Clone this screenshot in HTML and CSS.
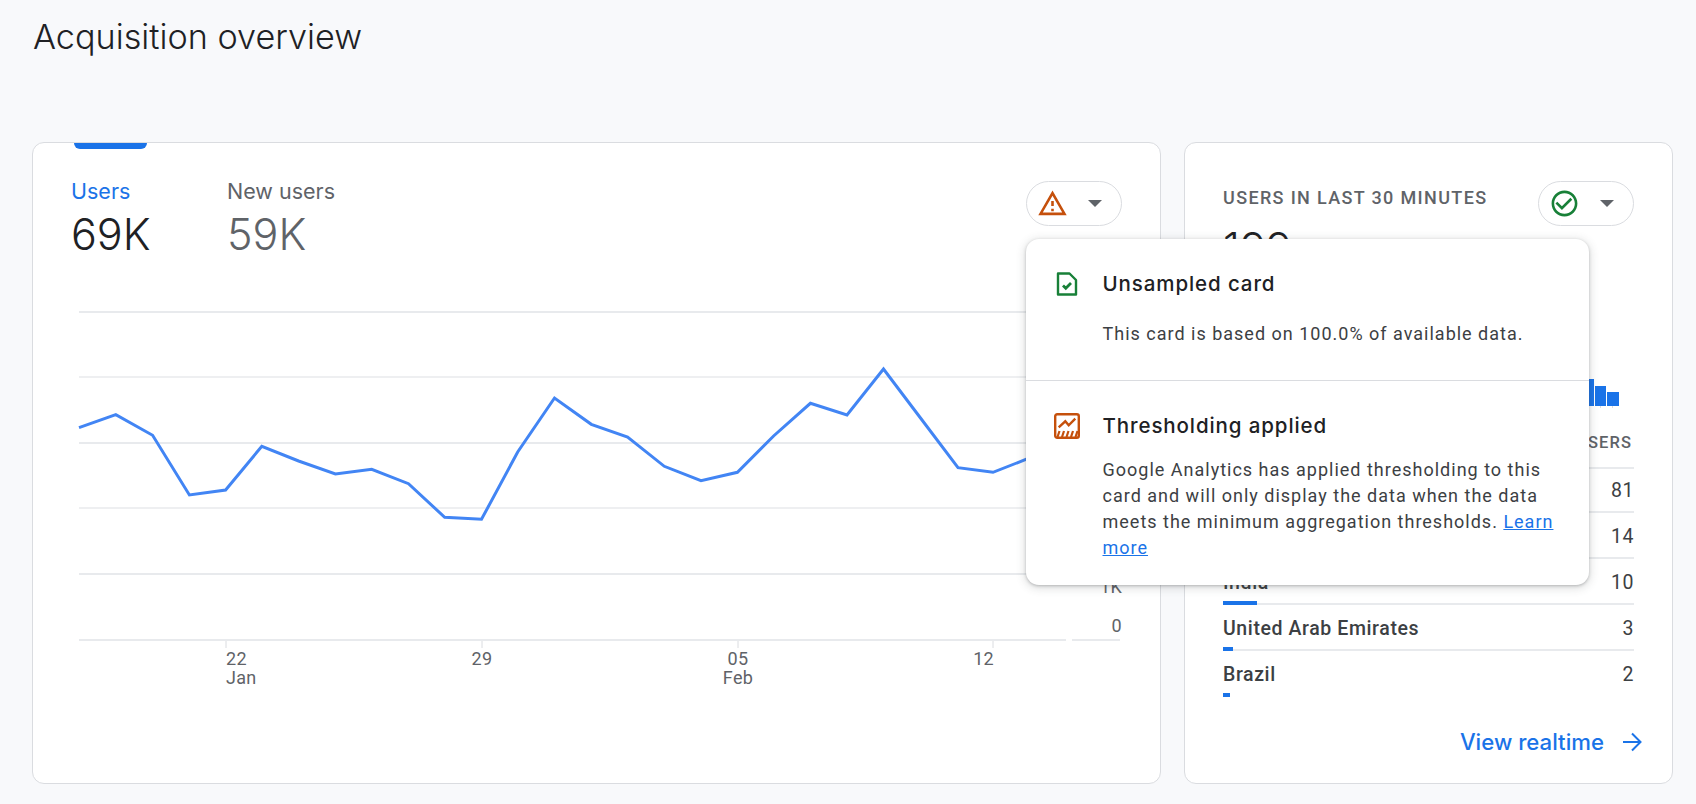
FILE: index.html
```html
<!DOCTYPE html>
<html lang="en">
<head>
<meta charset="utf-8">
<title>Acquisition overview</title>
<link rel="stylesheet" href="styles.css">
</head>
<body>
<div class="page">
  <h1 class="page-title">Acquisition overview</h1>
  <div class="cards">
    <section class="card card-main">
      <div class="tab-marker"></div>
      <div class="main-head">
        <div class="metrics">
          <div class="metric metric-active">
            <div class="metric-label">Users</div>
            <div class="metric-value">69K</div>
          </div>
          <div class="metric">
            <div class="metric-label">New users</div>
            <div class="metric-value">59K</div>
          </div>
        </div>
        <div class="chip chip-offset">
          <svg class="chip-icon warn" viewBox="0 0 24 24"><path d="M1 21h22L12 2 1 21zm3.47-2L12 5.99 19.53 19H4.47zM11 16h2v2h-2zm0-6h2v4h-2z"/></svg>
          <span class="caret"></span>
        </div>
      </div>
      <svg class="chart" viewBox="33 260 1127 440" width="1127" height="440">
        <g class="grid">
          <line x1="79" x2="1120" y1="312" y2="312"/>
          <line class="thin" x1="79" x2="1120" y1="377" y2="377"/>
          <line x1="79" x2="1120" y1="443" y2="443"/>
          <line class="thin" x1="79" x2="1120" y1="508" y2="508"/>
          <line x1="79" x2="1120" y1="574" y2="574"/>
          <line x1="79" x2="1066" y1="640" y2="640"/>
          <line x1="1072" x2="1120" y1="640" y2="640"/>
        </g>
        <g class="ticks">
          <line x1="226" x2="226" y1="641" y2="648"/>
          <line x1="482" x2="482" y1="641" y2="648"/>
          <line x1="738" x2="738" y1="641" y2="648"/>
          <line x1="993" x2="993" y1="641" y2="648"/>
        </g>
        <polyline class="series" points="79,427.7 115.8,414.7 152.6,435.3 189.4,495 225.6,490 261.8,446.3 298.6,461 335.4,474 371.7,469.3 408.5,483.7 444.7,517.3 481.5,519.3 517.7,452 554.5,398 591.3,424.3 627.6,437 664.3,466.3 701,480.7 737.4,472.3 773.6,436 810.4,403.3 847,415 883.5,369 920.5,418 958,467.7 993,472.3 1029.5,458 1066,440"/>
        <g class="axis-text">
          <text x="226" y="665">22</text>
          <text x="226" y="684">Jan</text>
          <text class="mid" x="482" y="665">29</text>
          <text class="mid" x="738" y="665">05</text>
          <text class="mid" x="738" y="684">Feb</text>
          <text class="end" x="994" y="665">12</text>
          <text class="end" x="1122" y="593">1K</text>
          <text class="end" x="1122" y="632">0</text>
        </g>
      </svg>
    </section>

    <section class="card card-side">
      <div class="side-head">
        <div class="side-heading">
          <div class="side-title">USERS IN LAST 30 MINUTES</div>
          <div class="metric-value">199</div>
        </div>
        <div class="chip">
          <svg class="chip-icon ok" viewBox="0 0 24 24"><path d="M16.59 7.58L10 14.17l-3.59-3.58L5 12l5 5 8-8zM12 2C6.48 2 2 6.48 2 12s4.48 10 10 10 10-4.48 10-10S17.52 2 12 2zm0 18c-4.42 0-8-3.58-8-8s3.58-8 8-8 8 3.58 8 8-3.58 8-8 8z"/></svg>
          <span class="caret"></span>
        </div>
      </div>
      <div class="mini-bars">
        <span class="mini-bar" style="height:20px"></span>
        <span class="mini-bar" style="height:34px"></span>
        <span class="mini-bar" style="height:27px"></span>
        <span class="mini-bar" style="height:20px"></span>
        <span class="mini-bar" style="height:14px"></span>
      </div>
      <div class="table-head"><span>COUNTRY</span><span>USERS</span></div>
      <div class="row">
        <div class="row-text"><span>United States</span><span>81</span></div>
        <div class="track"><div class="fill" style="width:275px"></div></div>
      </div>
      <div class="row">
        <div class="row-text"><span>Canada</span><span>14</span></div>
        <div class="track"><div class="fill" style="width:48px"></div></div>
      </div>
      <div class="row">
        <div class="row-text"><span>India</span><span>10</span></div>
        <div class="track"><div class="fill" style="width:34px"></div></div>
      </div>
      <div class="row">
        <div class="row-text"><span>United Arab Emirates</span><span>3</span></div>
        <div class="track"><div class="fill" style="width:10px"></div></div>
      </div>
      <div class="row">
        <div class="row-text"><span>Brazil</span><span>2</span></div>
        <div class="track track-last"><div class="fill" style="width:7px"></div></div>
      </div>
      <div class="side-foot">
        <span class="foot-link">View realtime</span>
        <svg class="foot-arrow" viewBox="0 0 20 20"><path d="M1 10H18M10 1.5L18.5 10L10 18.5"/></svg>
      </div>
    </section>
  </div>

  <aside class="popover">
    <div class="pop-section pop-first">
      <div class="pop-head">
        <svg class="pop-icon doc" viewBox="0 0 26 26"><path class="doc-outline" d="M4 2.5H15.5L22 9V23.5H4Z"/><path class="doc-check" d="M9 14.5l2.8 2.8 5.2-5.2"/></svg>
        <div class="pop-title">Unsampled card</div>
      </div>
      <p class="pop-text">This card is based on 100.0% of available data.</p>
    </div>
    <div class="pop-section pop-second">
      <div class="pop-head">
        <svg class="pop-icon thresh" viewBox="0 0 26 26">
          <rect class="th-frame" x="1.2" y="1.2" width="23.6" height="23.6" rx="2"/>
          <polyline class="th-line" points="4.7,14.3 11.3,8.3 14.7,12.3 21.3,5.7"/>
          <path class="th-hatch" d="M3.5 24L5.5 18M8 24L10 18M12.5 24L14.5 18M17 24L19 18M21.5 24L23.5 18"/>
        </svg>
        <div class="pop-title">Thresholding applied</div>
      </div>
      <p class="pop-text">Google Analytics has applied thresholding to this card and will only display the data when the data meets the minimum aggregation thresholds. <a class="pop-link" href="#">Learn more</a></p>
    </div>
  </aside>
</div>
</body>
</html>
```
FILE: styles.css
```css
* { box-sizing: border-box; }
html, body { margin: 0; height: 100%; }
body {
  background: #f8f9fb;
  font-family: Roboto, "Liberation Sans", sans-serif;
  color: #202124;
  overflow: hidden;
}
.page { position: relative; height: 804px; padding: 0 0 0 32px; }
.page-title {
  margin: 0;
  height: 142px;
  padding: 16px 0 0 1px;
  font-family: Inter, Roboto, sans-serif;
  font-size: 34.2px;
  line-height: 42px;
  font-weight: 300;
  color: #202124;
}
.cards { display: grid; grid-template-columns: 1129px 489px; column-gap: 23px; height: 642px; }
.card { background: #fff; border: 1px solid #dadce0; border-radius: 12px; overflow: hidden; }
.card-main { display: flex; flex-direction: column; }
.tab-marker { width: 73px; height: 6px; margin-left: 41px; background: #1a73e8; border-radius: 0 0 6px 6px; flex: none; }
.main-head { display: flex; justify-content: space-between; align-items: flex-start; margin-top: 29px; padding: 0 38px 0 38px; }
.metrics { display: flex; }
.metric { width: 156px; color: #5f6368; }
.metric-active { color: #202124; }
.metric-active .metric-label { color: #1a73e8; }
.metric-label { font-family: Inter, Roboto, sans-serif; font-size: 21.5px; line-height: 26px; }
.metric-value { font-family: Inter, Roboto, sans-serif; font-size: 43px; line-height: 52px; font-weight: 300; margin-top: 4px; }
.chip { flex: none; width: 96px; height: 45px; display: flex; align-items: center; padding-left: 10px; border: 1px solid #dadce0; border-radius: 23px; background: #fff; }
.chip-offset { margin-top: 3px; }
.chip-icon { width: 31px; height: 31px; flex: none; }
.warn { fill: #c5500c; }
.ok { fill: #188038; }
.caret { margin-left: 20px; width: 0; height: 0; border-left: 7px solid transparent; border-right: 7px solid transparent; border-top: 7px solid #5f6368; }
.chart { display: block; flex: none; }
.grid line { stroke: #e8eaed; stroke-width: 2; }
.grid line.thin { stroke-width: 1.4; }
.ticks line { stroke: #dadce0; stroke-width: 1; }
.series { fill: none; stroke: #4285f4; stroke-width: 3; stroke-linejoin: miter; }
.axis-text text { font-family: Roboto, sans-serif; font-size: 18px; letter-spacing: 0.3px; fill: #5f6368; }
.axis-text .mid { text-anchor: middle; }
.axis-text .end { text-anchor: end; }
.card-side { display: flex; flex-direction: column; padding: 38px 38px 0 38px; }
.side-head { display: flex; justify-content: space-between; align-items: flex-start; height: 91px; }
.side-heading { padding-top: 5px; }
.side-title { font-size: 18px; line-height: 24px; color: #5f6368; font-weight: 500; letter-spacing: 1.35px; white-space: nowrap; }
.side-heading .metric-value { margin-top: 12px; }
.mini-bars { display: flex; justify-content: flex-end; align-items: flex-end; column-gap: 1px; height: 134px; padding-right: 15px; }
.mini-bar { position: relative; width: 11px; background: #1a73e8; }
.mini-bar:last-child { width: 12px; }
.mini-bar::after { content: ""; position: absolute; left: 5px; top: 100%; width: 1px; height: 2px; background: #dadce0; }
.table-head { display: flex; justify-content: space-between; margin-top: 25px; height: 38px; padding: 0 2px 0 0; border-bottom: 2px solid #e8eaed; font-size: 16.5px; line-height: 24px; font-weight: 500; letter-spacing: 1.1px; color: #5f6368; }
.row { height: 46px; }
.row-text { display: flex; justify-content: space-between; height: 44px; padding: 9px 0 0; font-size: 19.5px; line-height: 26px; font-weight: 500; letter-spacing: 0.6px; color: #3c4043; }
.row-text span:last-child { font-weight: 400; }
.track { height: 2px; background: #e8eaed; }
.track-last { background: transparent; }
.fill { height: 4px; margin-top: -2px; background: #1a73e8; position: relative; top: -2px; }
.side-foot { margin-top: auto; margin-right: -8px; padding-bottom: 29px; display: flex; justify-content: flex-end; align-items: center; height: 53px; }
.foot-link { font-family: Inter, Roboto, sans-serif; font-size: 22.2px; line-height: 24px; font-weight: 500; color: #1a73e8; }
.foot-arrow { width: 20px; height: 20px; margin-left: 18px; fill: none; stroke: #1a73e8; stroke-width: 2; }
.popover { position: absolute; left: 1026px; top: 239px; width: 563px; height: 346px; background: #fff; border-radius: 13px; box-shadow: 0 1px 3px rgba(60,64,67,.3), 0 2px 8px 2px rgba(60,64,67,.15); }
.pop-section { padding: 33px 29px 0 28px; }
.pop-first { height: 142px; border-bottom: 1px solid #dadce0; }
.pop-head { display: flex; align-items: center; height: 24px; }
.pop-icon { flex: none; width: 26px; height: 26px; margin-right: 22.5px; }
.pop-title { font-family: Inter, Roboto, sans-serif; font-size: 20.5px; line-height: 24px; font-weight: 500; letter-spacing: 0.9px; color: #202124; }
.pop-text { margin: 19px 0 0 48.5px; font-size: 18px; line-height: 25.9px; letter-spacing: 1px; color: #3c4043; }
.pop-first .pop-text { margin-top: 25px; }
.pop-link { color: #1a73e8; text-decoration: underline; }
.doc-outline { fill: none; stroke: #188038; stroke-width: 2.4; stroke-linejoin: round; }
.doc-check { fill: none; stroke: #188038; stroke-width: 2.8; }
.th-frame { fill: none; stroke: #c5500c; stroke-width: 2.4; }
.th-line { fill: none; stroke: #c5500c; stroke-width: 2.4; }
.th-hatch { fill: none; stroke: #c5500c; stroke-width: 2.2; }
```
